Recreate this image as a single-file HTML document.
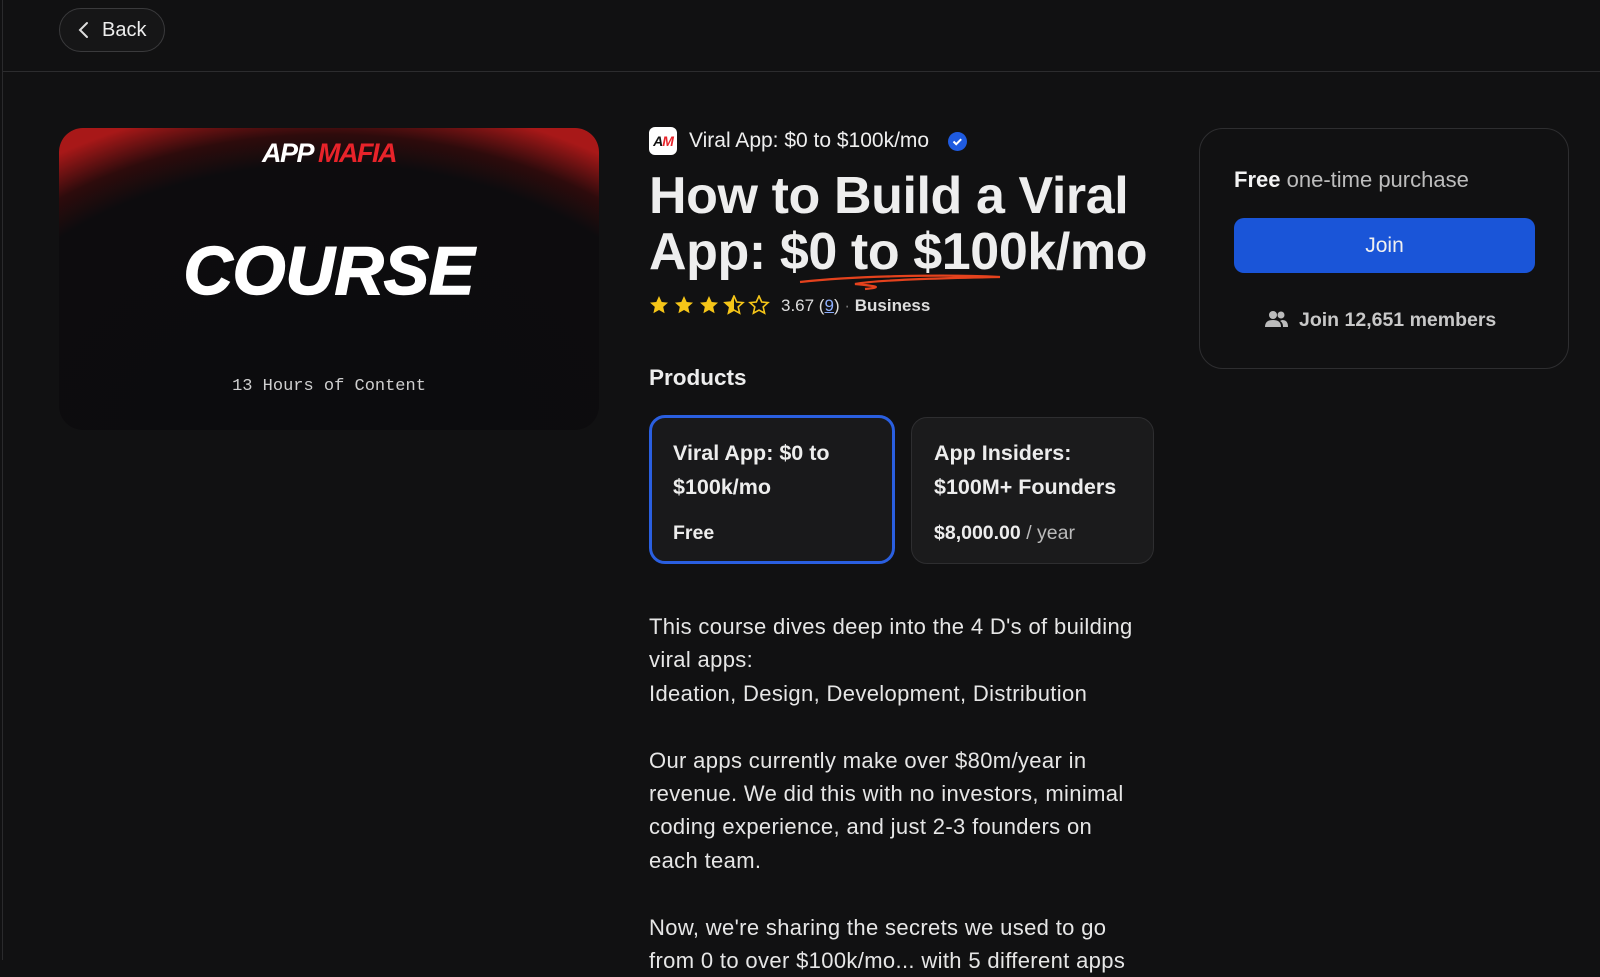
<!DOCTYPE html>
<html><head><style>
*{margin:0;padding:0;box-sizing:border-box}
body{width:1600px;height:960px;background:#111112;font-family:"Liberation Sans",sans-serif;color:#ededed;overflow:hidden;position:relative}
.abs{position:absolute}
.back{left:59px;top:8px;width:106px;height:44px;border:1.5px solid #3a3a3c;border-radius:22px;background:#161617;font-size:20px;display:flex;align-items:center;padding-left:18px;gap:12px}
.hr{left:3px;top:71px;width:1597px;height:1px;background:#2c2c2e}
.vl{left:2px;top:0;width:1px;height:960px;background:#2a2a2c}
.card{left:59px;top:128px;width:540px;height:302px;border-radius:24px;overflow:hidden;background:radial-gradient(ellipse 90% 110% at 50% 100%,#0c0c0e 0%,#0d0c0e 80%,#2e0b0c 89%,#a81818 100%);}
.t{white-space:nowrap}
.pc{border-radius:16px;background:#1b1b1c;border:1.5px solid #2e2e30}
.desc{left:649px;width:496px;font-size:22px;letter-spacing:0.35px;line-height:33.4px;color:#e6e6e6}
</style></head><body>
<div class="vl abs"></div>
<div class="back abs"><svg width="12" height="18" viewBox="0 0 12 18"><path d="M9 2L2 9l7 7" stroke="#ddd" stroke-width="2" fill="none" stroke-linecap="round"/></svg><span>Back</span></div>
<div class="hr abs"></div>
<div class="card abs">
 <div class="abs t" style="left:0;width:540px;text-align:center;top:10px;font-size:27px;font-weight:900;font-style:italic;letter-spacing:-1.5px"><span style="color:#fff">APP</span> <span style="color:#e8232a">MAFIA</span></div>
 <div class="abs t" style="left:0;width:540px;text-align:center;top:104px;font-size:68px;font-weight:900;font-style:italic;color:#fff;-webkit-text-stroke:1.5px #fff">COURSE</div>
 <div class="abs t" style="left:0;width:540px;text-align:center;top:249px;font-family:'Liberation Mono',monospace;font-size:17px;color:#cfcfcf">13 Hours of Content</div>
</div>
<div class="abs" style="left:649px;top:127px;width:28px;height:28px;background:#fff;border-radius:6px;font-weight:900;font-style:italic;font-size:14px;text-align:center;line-height:28px;letter-spacing:-1px"><span style="color:#111">A</span><span style="color:#e8232a">M</span></div>
<div class="abs t" style="left:689px;top:129px;font-size:21px;color:#eee">Viral App: $0 to $100k/mo</div>
<div class="abs" style="left:948px;top:132px;width:19px;height:19px;border-radius:50%;background:#1f5be0"><svg width="19" height="19"><path d="M5.5 9.5l2.7 2.7 5-5" stroke="#fff" stroke-width="2" fill="none"/></svg></div>
<div class="abs t" style="left:649px;top:168px;font-size:52px;font-weight:700;line-height:56px;color:#eee;letter-spacing:-0.4px">How to Build a Viral<br>App: $0 to $100k/mo</div>
<svg class="abs" style="left:795px;top:272px" width="210" height="26"><path d="M5 10C60 4 150 2 205 5 C150 6 80 8 60 12 C80 14 90 15 70 17" stroke="#e5421d" stroke-width="2.2" fill="none"/></svg>
<svg class="abs" style="left:649px;top:295px" width="126" height="22" viewBox="0 0 126 22">
<defs><path id="s" d="M10 1l2.7 6 6.3.6-4.8 4.3 1.4 6.3L10 15l-5.6 3.2 1.4-6.3L1 7.6l6.3-.6z"/></defs>
<use href="#s" fill="#f5c518"/><use href="#s" x="25" fill="#f5c518"/><use href="#s" x="50" fill="#f5c518"/>
<use href="#s" x="75" fill="none" stroke="#f5c518" stroke-width="1.6"/><path d="M85 1l-2.7 6-6.3.6 4.8 4.3-1.4 6.3L85 15z" fill="#f5c518"/>
<use href="#s" x="100" fill="none" stroke="#f5c518" stroke-width="1.6"/></svg>
<div class="abs t" style="left:781px;top:296px;font-size:17px;color:#ddd">3.67 (<span style="color:#8fb0ff;text-decoration:underline">9</span>) <span style="color:#777">·</span> <b style="color:#ddd">Business</b></div>
<div class="abs t" style="left:649px;top:365px;font-size:22.5px;font-weight:700">Products</div>
<div class="abs pc" style="left:649px;top:415px;width:246px;height:149px;border:3px solid #2a5fe0;background:#19191b"></div>
<div class="abs t" style="left:673px;top:437px;font-size:21.5px;font-weight:700;line-height:33.5px">Viral App: $0 to<br>$100k/mo</div>
<div class="abs" style="left:673px;top:522px;font-size:19.5px;font-weight:700">Free</div>
<div class="abs pc" style="left:911px;top:417px;width:243px;height:147px"></div>
<div class="abs t" style="left:934px;top:437px;font-size:21.5px;font-weight:700;line-height:33.5px">App Insiders:<br>$100M+ Founders</div>
<div class="abs t" style="left:934px;top:522px;font-size:19.5px"><b>$8,000.00</b> <span style="color:#bbb">/ year</span></div>
<div class="abs desc" style="top:610px">This course dives deep into the 4 D's of building viral apps:<br>Ideation, Design, Development, Distribution<br><br>Our apps currently make over $80m/year in revenue. We did this with no investors, minimal coding experience, and just 2-3 founders on each team.<br><br>Now, we're sharing the secrets we used to go from 0 to over $100k/mo... with 5 different apps</div>
<div class="abs" style="left:1199px;top:128px;width:370px;height:241px;border:1.5px solid #2e2e30;border-radius:24px;background:#111112"></div>
<div class="abs t" style="left:1234px;top:167px;font-size:22px"><b style="color:#f2f2f2">Free</b> <span style="color:#bdbdbd">one-time purchase</span></div>
<div class="abs" style="left:1234px;top:218px;width:301px;height:55px;background:#1a55d8;border-radius:10px;font-size:21px;text-align:center;line-height:55px;color:#f0f0f0">Join</div>
<svg class="abs" style="left:1265px;top:310px" width="23" height="19" viewBox="0 0 23 19"><circle cx="8" cy="5" r="4" fill="#bbb"/><circle cx="16" cy="5" r="3.5" fill="#bbb"/><path d="M0 17c0-5 3-7 8-7s8 2 8 7z" fill="#bbb"/><path d="M17 10c4 0 6 2 6 7h-5c0-3-1-5-3-6z" fill="#bbb"/></svg>
<div class="abs t" style="left:1299px;top:309px;font-size:19.5px;color:#c8c8c8;font-weight:700">Join 12,651 members</div>
</body></html>
